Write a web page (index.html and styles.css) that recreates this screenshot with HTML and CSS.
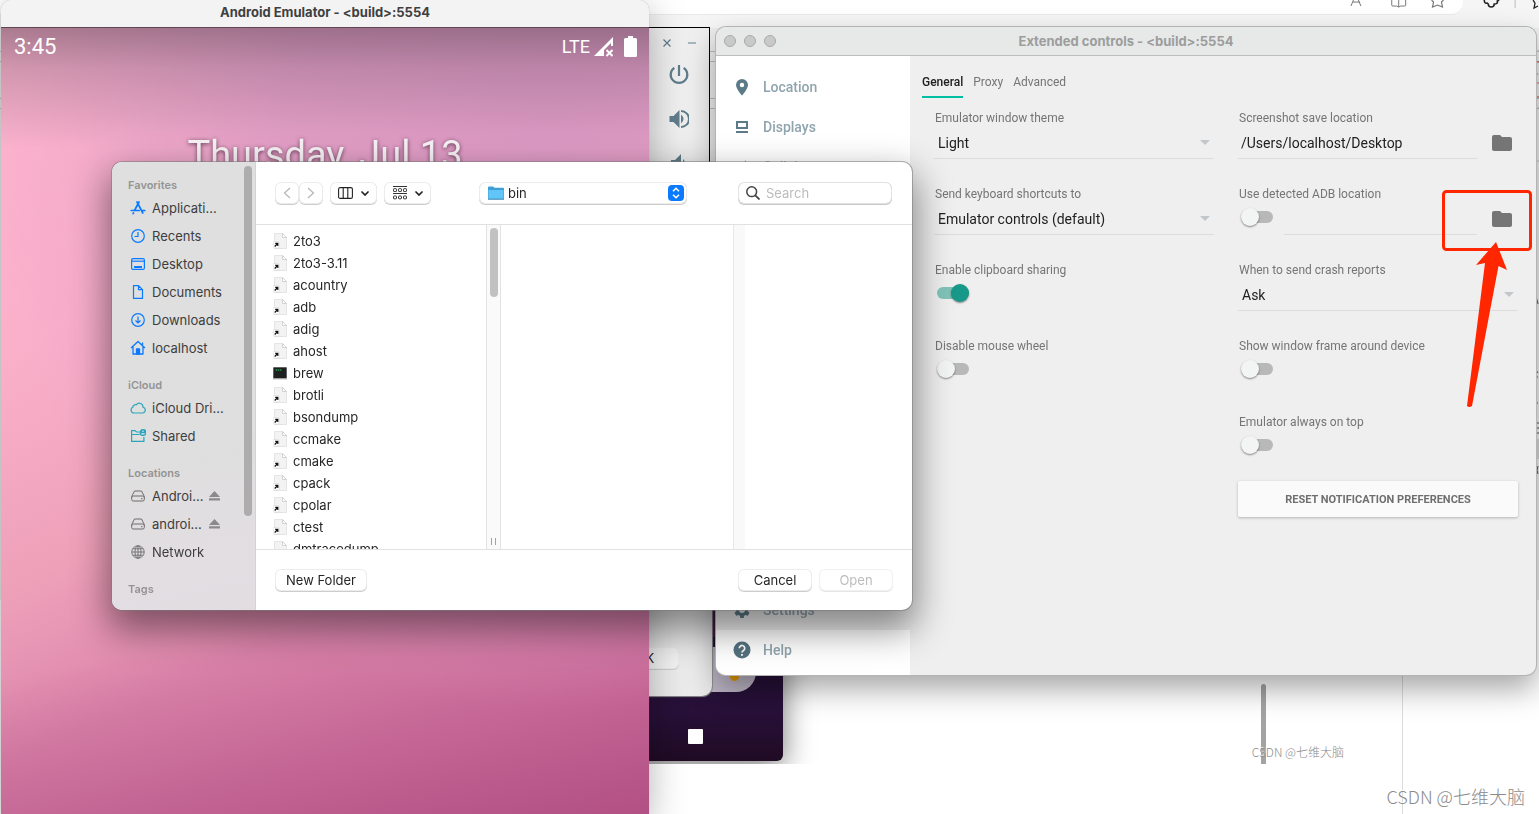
FILE: index.html
```html
<!DOCTYPE html>
<html lang="en">
<head>
<meta charset="utf-8">
<title>Android Emulator - Extended controls</title>
<link rel="stylesheet" href="styles.css">
</head>
<body>
<svg class="defs" aria-hidden="true">
  <symbol id="file" viewBox="0 0 14 16">
    <path d="M1.500 .5h8L13.500 4.500v11h-12z" fill="#f3f3f3" stroke="#e4e4e4"/>
    <path d="M9.500 .5v4h4z" fill="#fff" stroke="#c9c9c9" stroke-width=".8"/>
    <rect x=".2" y="8.500" width="6" height="6.500" rx="1" fill="#fff" stroke="#ccc" stroke-width=".5"/>
    <path d="M2.200 10.300h2.600v2.600M4.700 10.500 1.700 13.500" fill="none" stroke="#111" stroke-width="1.200"/>
  </symbol>
  <symbol id="folder" viewBox="0 0 20 16"><path d="M2 0h6l2 2h8a2 2 0 0 1 2 2v10a2 2 0 0 1-2 2H2a2 2 0 0 1-2-2V2a2 2 0 0 1 2-2z" fill="#757575"/></symbol>
  <symbol id="caret" viewBox="0 0 10 5"><path d="M0 0h10L5 5z" fill="#c3c7c9"/></symbol>
  <symbol id="chev" viewBox="0 0 8 5"><path d="M1 1l3 3 3-3" fill="none" stroke="#222" stroke-width="1.700" stroke-linecap="round"/></symbol>
  <symbol id="drive" viewBox="0 0 16 16"><path d="M4.500 3h7l2.800 5.500v3a1.500 1.500 0 0 1-1.500 1.500H3.200a1.500 1.500 0 0 1-1.500-1.500v-3zM1.700 9.500q.4-1.500 1.800-1.500h9q1.400 0 1.800 1.500M11 10.700h1.500" fill="none" stroke="#6c6c6c" stroke-linejoin="round"/></symbol>
  <symbol id="eject" viewBox="0 0 11 10"><path d="M5.500 0 11 6H0zM0 7.300h11v2.200H0z" fill="#8b898b"/></symbol>
</svg>

<main class="desktop">
  <div class="browser">
    <div class="browser-bar"><div class="address"></div>
      <svg class="browser-icons" viewBox="0 0 200 28" aria-hidden="true" fill="none" stroke="#777">
        <path d="M11 6 16-6l5 12M13 2h7M52-4v9q0 1 1 1h4l2 1 2-1h4q1 0 1-1v-9M59-4V7"/>
        <path d="M92 0l2 2-1 5 5-2 5 2-1-5 2-2" stroke-width="1.200"/>
        <path d="M145 0q0 4 3 3l1 1q0 3 3 3t3-3q4 0 3-3l2-1" stroke="#222" stroke-width="1.600"/>
        <path d="M176-1V8" stroke="#bbb"/><path d="M194 0l2 3-1 5 4-2" stroke="#222" stroke-width="1.300"/>
      </svg>
    </div>
    <div class="rails"></div>
  </div>
  <svg class="page-edge" viewBox="0 0 6 480" aria-hidden="true" fill="none" stroke="#555">
    <path d="M0 62h6M0 97h6" stroke="#d43a25"/><path d="M4 73v2M4 83h2" stroke="#e57"/>
    <path d="M0 51h6M0 108h6M0 161h6" stroke="#bbb"/>
    <path d="M3 296l2 8M3 370l2 3M3 377h2M3 399v8M3 403h2M3 423h3M3 428h3M3 433h3M5 466q-2 4 0 8"/>
    <path d="M3 439h3v20H3z" fill="#d4d4d4" stroke="none"/>
  </svg>
  <div class="page-rule"></div>

  <div class="shot">
    <div class="dark-window">
      <div class="dock"><i></i></div>
      <div class="dark-square"></div>
    </div>
    <div class="alert-window"><button type="button" class="mac-btn ok-btn">OK</button></div>
    <div class="page-scroll"></div>
    <p class="mark mark-small">CSDN @七维大脑</p>
  </div>
  <p class="mark mark-large">CSDN @七维大脑</p>

  <aside class="tool-strip" aria-label="Emulator tools">
    <div class="strip-top">
      <button type="button" aria-label="Close"><svg width="8" height="8" viewBox="0 0 8 8"><path d="M.5.5l7 7M7.500.5l-7 7" stroke="#607d8b" stroke-width="1.300"/></svg></button>
      <button type="button" aria-label="Minimize"><svg width="8" height="8" viewBox="0 0 8 8"><path d="M0 4h8" stroke="#8fa3ad" stroke-width="1.500"/></svg></button>
    </div>
    <button type="button" aria-label="Power"><svg width="20" height="20" viewBox="0 0 20 20" fill="none" stroke="#607d8b" stroke-width="2.200"><path d="M10 0v11M5.300 2.800a8.300 8.300 0 1 0 9.400 0"/></svg></button>
    <button type="button" aria-label="Volume up"><svg width="20" height="20" viewBox="0 0 20 20"><path d="M.5 7h4l6-6v18l-6-6h-4z" fill="#607d8b"/><path d="M12 5.500q5 4.500 0 9z" fill="#607d8b"/><path d="M12 2a8 8 0 0 1 0 16" fill="none" stroke="#607d8b" stroke-width="2"/></svg></button>
    <button type="button" aria-label="Volume down"><svg width="20" height="20" viewBox="0 0 20 20"><path d="M2 7h4l6-6v18l-6-6H2z" fill="#607d8b"/><path d="M14 6q4 4 0 8z" fill="#607d8b"/></svg></button>
  </aside>

  <section class="emulator">
    <header class="emu-title">Android Emulator - &lt;build&gt;:5554</header>
    <div class="emu-screen">
      <div class="status">
        <span class="clock">3:45</span>
        <span class="lte">LTE</span>
        <svg width="20" height="20" viewBox="0 0 20 20"><path d="M0 19 19 0v9h-2V6L10 13v6z" fill="#fff"/><path d="M12.500 13l6 6M18.500 13l-6 6" stroke="#fff" stroke-width="2"/></svg>
        <svg width="13" height="21" viewBox="0 0 13 21"><path d="M4 0h5v2h2.500A1.500 1.500 0 0 1 13 3.500v16a1.500 1.500 0 0 1-1.500 1.500h-10A1.500 1.500 0 0 1 0 19.500v-16A1.500 1.500 0 0 1 1.500 2H4z" fill="#fff"/></svg>
      </div>
      <p class="date">Thursday, Jul 13</p>
    </div>
  </section>

  <section class="extended">
    <header class="ext-title">
      <div class="lights"><i></i><i></i><i></i></div>
      <h1>Extended controls - &lt;build&gt;:5554</h1>
    </header>
    <div class="ext-body">
      <nav class="ext-nav">
        <a href="#location"><svg width="18" height="18" viewBox="0 0 18 18"><path fill-rule="evenodd" d="M9 1a6 6 0 0 0-6 6c0 4 6 10.500 6 10.500S15 11 15 7a6 6 0 0 0-6-6zm0 3.800a2.200 2.200 0 1 1 0 4.400 2.200 2.200 0 0 1 0-4.400z" fill="#5c7b88"/></svg>Location</a>
        <a href="#displays"><svg width="18" height="18" viewBox="0 0 18 18"><path d="M4 4h10v6H4z" fill="none" stroke="#5c7b88" stroke-width="2"/><path d="M3 13h12v2H3z" fill="#5c7b88"/></svg>Displays</a>
        <a href="#cellular"><svg width="18" height="18" viewBox="0 0 18 18"><path d="M3 15 13 2v13z" fill="#8ca0a9"/></svg>Cellular</a>
        <a href="#settings" class="nav-current"><svg width="18" height="18" viewBox="0 0 18 18"><path fill-rule="evenodd" d="M7.300 1h3.400l.4 2.200 1.600.9 2.100-.8 1.700 2.900-1.700 1.500v2.600l1.700 1.500-1.700 2.900-2.100-.8-1.600.9-.4 2.200H7.300l-.4-2.200-1.600-.9-2.100.8-1.700-2.900 1.700-1.500V7.700L1.500 6.200l1.700-2.900 2.100.8 1.600-.9zM9 6a3 3 0 1 0 0 6 3 3 0 0 0 0-6z" fill="#5c7b88"/></svg>Settings</a>
        <a href="#help"><svg width="18" height="18" viewBox="0 0 18 18"><circle cx="9" cy="9" r="8.500" fill="#54717e"/><path d="M6.300 7.200a2.700 2.700 0 1 1 4.500 2q-1.800 1.200-1.800 2.300" fill="none" stroke="#fff" stroke-width="1.700"/><path d="M8.100 13h1.800v1.800H8.100z" fill="#fff"/></svg>Help</a>
      </nav>
      <div class="ext-main">
        <div class="tabs" role="tablist">
          <button type="button" role="tab" aria-selected="true" class="tab-current">General</button>
          <button type="button" role="tab">Proxy</button>
          <button type="button" role="tab">Advanced</button>
        </div>
        <div class="settings">
          <div class="col">
            <div class="setting"><label for="theme">Emulator window theme</label>
              <div class="field"><select id="theme"><option>Light</option></select><svg class="caret"><use href="#caret"/></svg></div></div>
            <div class="setting"><label for="keys">Send keyboard shortcuts to</label>
              <div class="field"><select id="keys"><option>Emulator controls (default)</option></select><svg class="caret"><use href="#caret"/></svg></div></div>
            <div class="setting"><label for="clip">Enable clipboard sharing</label><input class="toggle" type="checkbox" id="clip" checked></div>
            <div class="setting"><label for="wheel">Disable mouse wheel</label><input class="toggle" type="checkbox" id="wheel"></div>
          </div>
          <div class="col">
            <div class="setting"><label for="save">Screenshot save location</label>
              <div class="path-row"><input class="path" type="text" id="save" value="/Users/localhost/Desktop"><button type="button" class="pick" aria-label="Choose save location"><svg width="20" height="16"><use href="#folder"/></svg></button></div></div>
            <div class="setting"><label for="adb">Use detected ADB location</label>
              <div class="path-row"><input class="toggle" type="checkbox" id="adb"><input class="path path-adb" type="text" aria-label="ADB path"><button type="button" class="pick" aria-label="Choose ADB location"><svg width="20" height="16"><use href="#folder"/></svg></button></div></div>
            <div class="setting"><label for="crash">When to send crash reports</label>
              <div class="field"><select id="crash"><option>Ask</option></select><svg class="caret"><use href="#caret"/></svg></div></div>
            <div class="setting"><label for="frame">Show window frame around device</label><input class="toggle" type="checkbox" id="frame"></div>
            <div class="setting setting-last"><label for="ontop">Emulator always on top</label><input class="toggle" type="checkbox" id="ontop"></div>
            <button type="button" class="reset">RESET NOTIFICATION PREFERENCES</button>
          </div>
        </div>
      </div>
    </div>
    <svg class="callout" width="92" height="220" viewBox="0 0 92 220" aria-hidden="true">
      <rect x="2.500" y="2.500" width="87" height="58" rx="3" fill="none" stroke="#ff2600" stroke-width="3"/>
      <path d="M55 53 66 81l-8.500-4L31 217q-3 2-5 0L44 74l-9 2z" fill="#ff2600"/>
    </svg>
  </section>

  <section class="dialog" role="dialog" aria-label="Open">
    <aside class="places">
      <div class="places-list">
        <h2>Favorites</h2>
        <ul>
          <li><svg class="pi" viewBox="0 0 16 16" fill="none" stroke="#0a7aff" stroke-width="1.700" stroke-linecap="round"><path d="M7 2l5.800 11M9 2 4.500 10.500M1.200 10.500h8M12 10.500h2.800M3.500 13l-.4.700"/></svg>Applicati...</li>
          <li><svg class="pi" viewBox="0 0 16 16" fill="none" stroke="#0a7aff" stroke-width="1.200"><circle cx="8" cy="8" r="6.300"/><path d="M8 4v4.500H4.500"/></svg>Recents</li>
          <li><svg class="pi" viewBox="0 0 16 16" fill="none" stroke="#0a7aff" stroke-width="1.200"><rect x="1.600" y="2.600" width="12.800" height="10.800" rx="1.500"/><path d="M2 5.200h12"/><path d="M4 11h8" stroke-width="2"/></svg>Desktop</li>
          <li><svg class="pi" viewBox="0 0 16 16" fill="none" stroke="#0a7aff" stroke-width="1.200" stroke-linejoin="round"><path d="M3.500 1.600h5l4 4v8.800h-9zM8.500 1.600v4h4"/></svg>Documents</li>
          <li><svg class="pi" viewBox="0 0 16 16" fill="none" stroke="#0a7aff" stroke-width="1.200"><circle cx="8" cy="8" r="6.300"/><path d="M8 4.500v6.500M5.500 8.500 8 11l2.500-2.500"/></svg>Downloads</li>
          <li><svg class="pi" viewBox="0 0 16 16" fill="none" stroke="#0a7aff" stroke-width="1.300" stroke-linejoin="round"><path d="M1 8l7-6.500L15 8M3 6.500v7.500h10V6.500M12.500 5V2.500"/><path d="M6.500 9h3v5h-3z" fill="#0a7aff"/></svg>localhost</li>
        </ul>
        <h2>iCloud</h2>
        <ul>
          <li><svg class="pi" viewBox="0 0 16 16" fill="none" stroke="#2ba5bd" stroke-width="1.200"><path d="M4 13h8.500a3 3 0 0 0 .5-5.900 3.700 3.700 0 0 0-6.700-2.300A2.700 2.700 0 0 0 2.800 7.300 3 3 0 0 0 4 13z"/></svg>iCloud Dri...</li>
          <li><svg class="pi" viewBox="0 0 16 16" fill="none" stroke="#2ba5bd" stroke-width="1.200"><path d="M9.500 4H6.500L5 2.600H1.600v10.800h12.300V9M1.600 6.500h8"/><circle cx="13" cy="4.500" r="2.900" fill="#2ba5bd"/><path d="M13 2.600v1.500M11.300 6.300q1.700-1.500 3.400 0" stroke="#e0e0e0"/></svg>Shared</li>
        </ul>
        <h2>Locations</h2>
        <ul>
          <li><svg class="pi"><use href="#drive"/></svg><span class="vol">Androi...</span><svg class="eject"><use href="#eject"/></svg></li>
          <li><svg class="pi"><use href="#drive"/></svg><span class="vol">androi...</span><svg class="eject"><use href="#eject"/></svg></li>
          <li><svg class="pi" viewBox="0 0 16 16" fill="none" stroke="#6c6c6c" stroke-width=".9"><circle cx="8" cy="8" r="6.200"/><ellipse cx="8" cy="8" rx="3" ry="6.200"/><path d="M8 1.800v12.400M1.800 8h12.400M2.800 4.800h10.400M2.800 11.200h10.400"/></svg>Network</li>
        </ul>
        <h2>Tags</h2>
      </div>
      <div class="places-scroll"></div>
    </aside>
    <div class="chooser">
      <header class="chooser-bar">
        <div class="pair">
          <button type="button" class="mac-btn" aria-label="Back"><svg width="8" height="12" viewBox="0 0 8 12"><path d="M7 1 1.500 6 7 11" fill="none" stroke="#b5b5b5" stroke-width="1.200"/></svg></button>
          <button type="button" class="mac-btn" aria-label="Forward"><svg width="8" height="12" viewBox="0 0 8 12"><path d="M1 1l5.500 5L1 11" fill="none" stroke="#b5b5b5" stroke-width="1.200"/></svg></button>
        </div>
        <button type="button" class="mac-btn view-btn" aria-label="Column view"><svg width="15" height="12" viewBox="0 0 15 12" fill="none" stroke="#222" stroke-width="1.100"><rect x=".6" y=".6" width="13.800" height="10.800" rx="1.500"/><path d="M5.200.6v10.800M9.800.6v10.800"/></svg><svg width="8" height="5"><use href="#chev"/></svg></button>
        <button type="button" class="mac-btn view-btn" aria-label="Group by"><svg width="14" height="14" viewBox="0 0 14 14" fill="none" stroke="#333"><path d="M0 .5h14M0 7.500h14"/><rect x=".5" y="2.700" width="3" height="2.800" rx=".6"/><rect x="5.500" y="2.700" width="3" height="2.800" rx=".6"/><rect x="10.500" y="2.700" width="3" height="2.800" rx=".6"/><rect x=".5" y="10" width="3" height="2.800" rx=".6"/><rect x="5.500" y="10" width="3" height="2.800" rx=".6"/><rect x="10.500" y="10" width="3" height="2.800" rx=".6"/></svg><svg width="8" height="5"><use href="#chev"/></svg></button>
        <div class="popup">
          <svg width="16" height="14" viewBox="0 0 16 14"><path d="M0 1.500Q0 .5 1 .5h4l1.500 1.300H15q1 0 1 1V13H0z" fill="#3d9fd3"/><path d="M.5 4h15v8.500H.5z" fill="#62c5f7"/><path d="M0 13h16v.8H0z" fill="#4790b5"/></svg>
          <select aria-label="Folder"><option>bin</option></select>
          <svg width="16" height="16" viewBox="0 0 16 16"><rect width="16" height="16" rx="4" fill="#0a7aff"/><path d="M5 6.300l3-3 3 3M5 9.700l3 3 3-3" fill="none" stroke="#fff" stroke-width="1.600"/></svg>
        </div>
        <label class="search"><svg width="14" height="14" viewBox="0 0 14 14" fill="none" stroke="#444" stroke-width="1.500"><circle cx="5.700" cy="5.700" r="4.900"/><path d="M9.300 9.300 13.500 13.500" stroke-width="1.800"/></svg><input type="search" placeholder="Search" aria-label="Search"></label>
      </header>
      <div class="columns">
        <ul class="files">
          <li><svg class="fi"><use href="#file"/></svg>2to3</li>
          <li><svg class="fi"><use href="#file"/></svg>2to3-3.11</li>
          <li><svg class="fi"><use href="#file"/></svg>acountry</li>
          <li><svg class="fi"><use href="#file"/></svg>adb</li>
          <li><svg class="fi"><use href="#file"/></svg>adig</li>
          <li><svg class="fi"><use href="#file"/></svg>ahost</li>
          <li><svg class="fi" viewBox="0 0 14 16"><path d="M.3 2.300h13.400v11H.3z" fill="#1d1f21"/><path d="M0 13.300h14v1H0z" fill="#999"/><path d="M2.500 5h6" stroke="#2fd158" stroke-dasharray="1.500 .7"/></svg>brew</li>
          <li><svg class="fi"><use href="#file"/></svg>brotli</li>
          <li><svg class="fi"><use href="#file"/></svg>bsondump</li>
          <li><svg class="fi"><use href="#file"/></svg>ccmake</li>
          <li><svg class="fi"><use href="#file"/></svg>cmake</li>
          <li><svg class="fi"><use href="#file"/></svg>cpack</li>
          <li><svg class="fi"><use href="#file"/></svg>cpolar</li>
          <li><svg class="fi"><use href="#file"/></svg>ctest</li>
          <li><svg class="fi"><use href="#file"/></svg>dmtracedump</li>
        </ul>
        <div class="col-scroll"><div class="thumb"></div><div class="grip"></div></div>
        <div class="col-empty"></div>
        <div class="col-gutter"></div>
        <div class="col-rest"></div>
      </div>
      <footer class="chooser-foot">
        <button type="button" class="mac-btn new-btn">New Folder</button>
        <button type="button" class="mac-btn act-btn">Cancel</button>
        <button type="button" class="mac-btn act-btn" disabled>Open</button>
      </footer>
    </div>
  </section>
</main>
</body>
</html>
```
FILE: styles.css
```css
* { box-sizing: border-box; }
body { margin: 0; font-family: Inter, "Liberation Sans", sans-serif; font-size: 13px; color: #262626; }
h1, h2, p, ul { margin: 0; padding: 0; }
ul { list-style: none; }
button, input, select { font: inherit; color: inherit; margin: 0; padding: 0; border: 0; background: none; }
select { appearance: none; outline: 0; }
input { outline: 0; min-width: 0; }
svg { flex: none; display: block; }
.defs { position: absolute; width: 0; height: 0; }

.desktop { position: relative; min-height: 100vh; overflow: hidden; background: #fff; }

/* browser page behind the windows */
.browser { position: absolute; top: 0; left: 0; right: 0; height: 600px; background: #ededed; }
.browser-bar { display: flex; height: 28px; background: #f5f5f5; }
.address { flex: 1; height: 15px; margin-right: 76px; background: #fff; border-bottom: 1px solid #e9e9e9; border-radius: 0 0 12px 0; }
.browser-icons { position: absolute; top: 0; right: 0; width: 199px; height: 28px; }
.rails { height: 140px; background: linear-gradient(#bbb, #bbb) 0 23px / 100% 1px no-repeat, linear-gradient(#bbb, #bbb) 0 33px / 100% 1px no-repeat, linear-gradient(#bbb, #bbb) 0 70px / 100% 1px no-repeat, linear-gradient(#bbb, #bbb) 0 80px / 100% 1px no-repeat; }
.page-edge { position: absolute; top: 0; right: 0; width: 6px; height: 480px; }
.page-rule { position: absolute; top: 600px; bottom: 0; right: 136px; width: 1px; background: #dcdcdc; }

.shot { position: absolute; top: 600px; left: 0; right: 0; height: 164px; overflow: hidden; }
.dark-window { position: absolute; top: 0; left: 500px; width: 283px; height: 161px; border-radius: 0 0 6px 6px; background: linear-gradient(#4a1849 37px, #211032 37px, #281039 110px, #200b24); box-shadow: 0 6px 30px rgba(0,0,0,.55); }
.dock { position: absolute; top: 47px; right: 27px; width: 140px; height: 45px; border-radius: 0 0 20px 0; background: #bcb4c4; }
.dock i { position: absolute; right: 17px; bottom: 11px; width: 9px; height: 9px; border-radius: 50%; background: #e59a05; }
.dark-square { position: absolute; left: 188px; top: 129px; width: 15px; height: 15px; border-radius: 1px; background: #fff; }
.alert-window { position: absolute; top: -100px; left: 500px; width: 212px; height: 196px; padding: 0 34px 28px 0; display: flex; align-items: flex-end; justify-content: flex-end; border-radius: 10px; background: #ebebeb; box-shadow: 0 0 1px 1px #8d8d8d; }
.page-scroll { position: absolute; right: 273px; top: 84px; bottom: 0; width: 5px; border-radius: 3px 3px 0 0; background: #a3a3a3; }
.mark { position: absolute; font-family: "Noto Sans CJK SC", sans-serif; font-weight: 300; color: #8b8b8b; white-space: nowrap; text-shadow: -1px -1px 1px #fff; }
.mark-small { right: 195px; top: 143px; font-size: 12px; line-height: 18px; }
.mark-large { right: 14px; bottom: 4px; font-size: 18px; line-height: 28px; }

.mac-btn { display: flex; align-items: center; justify-content: center; height: 20px; border-radius: 5px; background: #fff; box-shadow: 0 0 0 1px #ececec, 0 1px 0 1px #cdcdcd; line-height: 20px; }
.mac-btn:disabled { color: #bdbdbd; box-shadow: 0 0 0 1px #f0f0f0, 0 1px 0 1px #e6e6e6; }
.ok-btn { width: 66px; background: #f3f3f3; }

/* emulator tool strip */
.tool-strip { position: absolute; left: 648px; top: 27px; width: 62px; height: 560px; border: 1px solid #000; background: #efefef; display: flex; flex-direction: column; align-items: center; gap: 24px; }
.tool-strip button { display: flex; }
.strip-top { align-self: stretch; height: 13px; margin-top: 8px; margin-bottom: -8px; padding: 0 13px 0 14px; display: flex; justify-content: space-between; align-items: center; }

/* emulator */
.emulator { position: absolute; left: 1px; top: 0; bottom: 0; width: 648px; display: flex; flex-direction: column; border-radius: 10px 10px 0 0; overflow: hidden; box-shadow: 0 0 1px #8c8c8c; filter: drop-shadow(0 10px 18px rgba(0,0,0,.3)); }
.emu-title { height: 28px; line-height: 25px; text-align: center; font-weight: 700; color: #3f3f3f; background: #f3f3f3; border-bottom: 1px solid #5e4652; }
.emu-screen { flex: 1; background:
  linear-gradient(rgba(80,60,75,.48), rgba(85,65,85,.25) 40px, rgba(80,60,80,0) 120px),
  radial-gradient(ellipse 90% 75% at 85% 12%, #dd9ac4 0, rgba(224,156,198,.85) 45%, rgba(230,160,198,0) 100%),
  linear-gradient(170deg, rgba(176,76,128,0) 72%, rgba(166,68,122,.7) 100%),
  linear-gradient(155deg, #ffb6ce 0, #fbb0ca 30%, #eea0b9 52%, #dc85ab 68%, #d06e9e 100%); }
.status { display: flex; align-items: center; padding: 8px 12px 0 13px; height: 29px; color: #fff; font-family: Roboto, sans-serif; line-height: 26px; }
.clock { font-size: 22px; margin-right: auto; }
.lte { font-size: 18px; margin-right: 4px; }
.status svg + svg { margin-left: 10px; }
.date { margin-top: 74px; text-align: center; font: 400 38px/48px Roboto, sans-serif; color: #f6f1f4; text-shadow: 0 1px 4px rgba(50,20,40,.75); }

/* extended controls */
.extended { position: absolute; left: 716px; right: 3px; top: 27px; height: 648px; display: flex; flex-direction: column; border-radius: 10px; background: #efefef; box-shadow: 0 0 0 1px #b4b4b4, 0 14px 30px rgba(0,0,0,.35); font-family: Roboto, sans-serif; }
.ext-title { display: grid; grid-template-columns: 1fr auto 1fr; align-items: center; height: 29px; padding: 0 8px; background: #e7e9e8; border-bottom: 1px solid #bdbdbd; border-radius: 10px 10px 0 0; font-family: Inter, sans-serif; }
.ext-title h1 { font-size: 13px; font-weight: 700; color: #9c9d9d; }
.lights { display: flex; gap: 8px; }
.lights i { width: 12px; height: 12px; border-radius: 50%; background: #c9c9c9; border: 1px solid #a9a9a9; }
.ext-body { flex: 1; display: flex; }
.ext-nav { width: 194px; padding: 11px 0 5px; display: flex; flex-direction: column; background: #fff; border-radius: 0 0 0 10px; }
.ext-nav a { display: flex; align-items: center; gap: 12px; height: 40px; padding-left: 17px; font-size: 14px; line-height: 18px; color: #90a4ae; text-decoration: none; font-weight: 500; }
.ext-nav .nav-current { margin-top: auto; background: #efefef; }
.ext-main { flex: 1; min-width: 0; padding: 14px 18px 0 12px; }
.tabs { display: flex; gap: 10px; height: 28px; font-size: 12px; color: #757575; }
.tabs button { padding-bottom: 4px; line-height: 24px; border-bottom: 2px solid transparent; }
.tabs .tab-current { color: #212121; font-weight: 500; border-color: #00bfa5; }
.settings { display: grid; grid-template-columns: 1fr 1fr; gap: 24px; padding: 12px 0 0 12px; }
.col { display: flex; flex-direction: column; min-width: 0; }
.setting { min-height: 76px; }
.setting-last { min-height: 67px; }
.setting label { display: block; padding-left: 1px; font-size: 12px; line-height: 17px; color: #757575; }
.field { display: flex; align-items: center; height: 32px; padding: 0 4px; border-bottom: 1px solid #dcdcdc; }
.field select { flex: 1; height: 31px; font-size: 14px; color: #212121; }
.caret { width: 10px; height: 5px; margin-left: -10px; pointer-events: none; }
.path-row { display: flex; height: 32px; }
.path { flex: 1; padding-left: 3px; border-bottom: 1px solid #dcdcdc; font-size: 14px; color: #212121; }
.path-adb { margin-left: 11px; }
.pick { width: 41px; padding-left: 15px; display: flex; align-items: center; }
.toggle { appearance: none; display: grid; align-items: center; width: 32px; height: 18px; margin: 5px 0 0 3px; flex: none; }
.toggle::before, .toggle::after { content: ""; grid-area: 1 / 1; }
.toggle::before { height: 12px; border-radius: 6px; background: #b8b8b8; }
.toggle::after { width: 18px; height: 18px; border-radius: 50%; background: #f3f5f4; box-shadow: 0 1px 2px rgba(0,0,0,.45); }
.toggle:checked::before { background: #81c3b9; }
.toggle:checked::after { justify-self: end; background: #17998a; }
.reset { height: 36px; border-radius: 2px; background: #fafafa; color: #6f6f6f; font-size: 11px; font-weight: 700; box-shadow: 0 1px 3px rgba(0,0,0,.25); }
.callout { position: absolute; right: 3px; top: 162px; pointer-events: none; }

/* file dialog */
.dialog { position: absolute; left: 112px; top: 162px; width: 800px; height: 448px; display: flex; border-radius: 10px; background: #fff; box-shadow: 0 0 0 1px rgba(120,120,120,.55), 0 16px 36px 4px rgba(0,0,0,.45); overflow: hidden; }
.places { display: flex; width: 144px; padding: 4px 3px 0 16px; background: linear-gradient(168deg, #dfdfdf 60%, #e3dde2); border-right: 1px solid #d5d2d4; }
.places-list { flex: 1; min-width: 0; }
.places-list h2 { margin-top: 13px; font-size: 11px; line-height: 20px; font-weight: 600; color: #949494; }
.places-list h2:first-child { margin-top: 9px; }
.places-list h2 + ul { margin-top: -1px; }
.places-list li { display: flex; align-items: center; height: 28px; padding-left: 2px; gap: 6px; color: #3d3d3d; white-space: nowrap; }
.pi { width: 16px; height: 16px; }
.vol { width: 51px; }
.eject { width: 11px; height: 10px; }
.places-scroll { width: 8px; height: 350px; border-radius: 4px; background: #adadad; }
.chooser { flex: 1; min-width: 0; display: flex; flex-direction: column; }
.chooser-bar { display: flex; align-items: center; height: 63px; padding: 0 21px 0 20px; border-bottom: 1px solid #e1e1e1; }
.pair { display: flex; gap: 2px; margin-right: 9px; }
.pair .mac-btn { width: 22px; }
.view-btn { width: 45px; gap: 8px; margin-right: 9px; }
.popup { display: flex; align-items: center; width: 206px; height: 20px; margin-left: 41px; padding: 0 2px 0 8px; border-radius: 5px; box-shadow: 0 0 0 1px #ececec, 0 1px 0 1px #cdcdcd; }
.popup select { flex: 1; height: 20px; padding-left: 4px; }
.search { display: flex; align-items: center; gap: 6px; width: 152px; height: 20px; margin-left: auto; padding-left: 7px; border-radius: 5px; box-shadow: 0 0 0 1px #e2e2e2, 0 1px 0 1px #c9c9c9; }
.search input { flex: 1; }
.search input::placeholder { color: #bcbcbc; }
.columns { flex: 1; min-height: 0; display: flex; overflow: hidden; }
.files { width: 230px; padding: 5px 0 0 17px; }
.files li { display: flex; align-items: center; height: 22px; gap: 6px; }
.fi { width: 14px; height: 16px; }
.col-scroll { width: 15px; padding: 3px 3px 4px; display: flex; flex-direction: column; justify-content: space-between; align-items: center; background: #fafafa; border-left: 1px solid #e3e3e3; border-right: 1px solid #e3e3e3; }
.thumb { width: 8px; height: 69px; border-radius: 4px; background: #c1c1c1; }
.grip { width: 5px; height: 7px; border: solid #a2a2a2; border-width: 0 1px; }
.col-empty { flex: 1; }
.col-gutter { width: 12px; background: #f9f9f9; border-left: 1px solid #e8e8e8; }
.col-rest { width: 167px; }
.chooser-foot { display: flex; align-items: center; gap: 9px; height: 61px; padding: 0 20px; border-top: 1px solid #e1e1e1; }
.new-btn { width: 90px; margin-right: auto; }
.act-btn { width: 72px; }
```
